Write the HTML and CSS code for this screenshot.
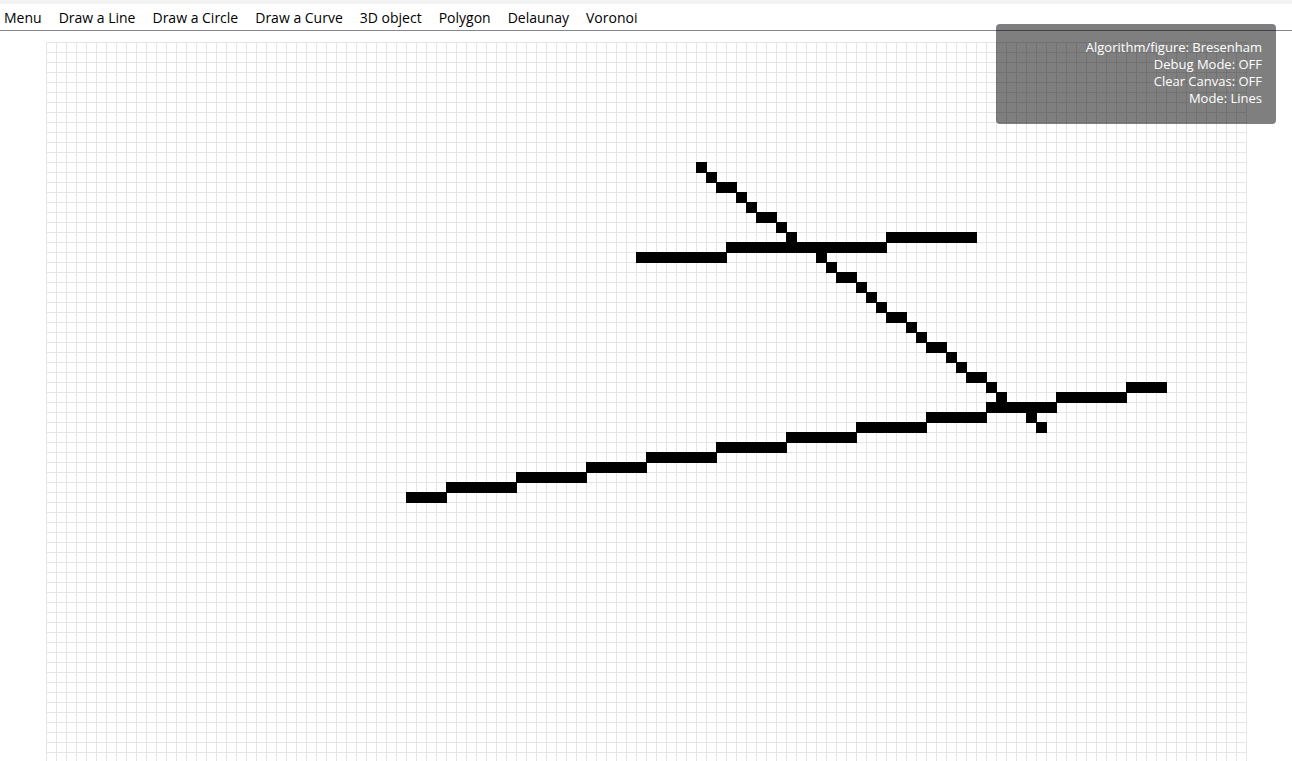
FILE: index.html
```html
<!DOCTYPE html>
<html lang="en">
<head>
<meta charset="utf-8">
<title>Raster graphics editor</title>
<link rel="stylesheet" href="styles.css">
</head>
<body>
<div class="app">
  <nav class="menu-bar">
    <button class="menu-item" type="button">Menu</button>
    <button class="menu-item" type="button">Draw a Line</button>
    <button class="menu-item" type="button">Draw a Circle</button>
    <button class="menu-item" type="button">Draw a Curve</button>
    <button class="menu-item" type="button">3D object</button>
    <button class="menu-item" type="button">Polygon</button>
    <button class="menu-item" type="button">Delaunay</button>
    <button class="menu-item" type="button">Voronoi</button>
  </nav>
  <main class="stage">
    <div class="sheet">
      <svg class="canvas" width="1201" height="801" shape-rendering="crispEdges" role="img" aria-label="Pixel grid with three Bresenham lines">
        <defs>
          <pattern id="grid" width="10" height="10" patternUnits="userSpaceOnUse">
            <path class="grid-line" d="M0 0h10v1h-9v9h-1z"/>
          </pattern>
        </defs>
        <rect width="1201" height="801" fill="url(#grid)"/>
        <g class="pixels">
          <path d="M650 120h11v11h-11z M660 130h11v11h-11z M670 140h21v11h-21z M690 150h11v11h-11z M700 160h11v11h-11z M710 170h21v11h-21z M730 180h11v11h-11z M740 190h11v11h-11z M770 210h11v11h-11z M780 220h11v11h-11z M790 230h21v11h-21z M810 240h11v11h-11z M820 250h11v11h-11z M830 260h11v11h-11z M840 270h21v11h-21z M860 280h11v11h-11z M870 290h11v11h-11z M880 300h21v11h-21z M900 310h11v11h-11z M910 320h11v11h-11z M920 330h21v11h-21z M940 340h11v11h-11z M950 350h11v11h-11z M980 370h11v11h-11z M990 380h11v11h-11z"/>
          <path d="M590 210h91v11h-91z M680 200h161v11h-161z M840 190h91v11h-91z"/>
          <path d="M360 450h41v11h-41z M400 440h71v11h-71z M470 430h71v11h-71z M540 420h61v11h-61z M600 410h71v11h-71z M670 400h71v11h-71z M740 390h71v11h-71z M810 380h71v11h-71z M880 370h61v11h-61z M940 360h71v11h-71z M1010 350h71v11h-71z M1080 340h41v11h-41z"/>
        </g>
      </svg>
    </div>
  </main>
  <aside class="status">
    <div>Algorithm/figure: Bresenham</div>
    <div>Debug Mode: OFF</div>
    <div>Clear Canvas: OFF</div>
    <div>Mode: Lines</div>
  </aside>
</div>
</body>
</html>
```
FILE: styles.css
```css
* { box-sizing: border-box; }

body {
  margin: 0;
  background: #fff;
}

.app {
  position: relative;
  display: flex;
  flex-direction: column;
  height: 100vh;
  overflow: hidden;
}

.menu-bar {
  display: flex;
  gap: 17px;
  padding: 3px 4px 1px;
  border-top: 4px solid #f2f2f2;
  border-bottom: 1px solid #828790;
}

.menu-item {
  padding: 0;
  border: 0;
  background: none;
  color: #000;
  font: 14px/22px "Open Sans", "Noto Sans", sans-serif;
  white-space: nowrap;
}

.stage {
  flex: 1;
  min-height: 0;
  padding-top: 11px;
  overflow: hidden;
}

.sheet {
  width: 1200px;
  margin: 0 auto;
}

.canvas { display: block; }

.grid-line { fill: #e5e5e5; }

.pixels { fill: #000; }

.status {
  position: absolute;
  top: 24px;
  right: 16px;
  width: 280px;
  min-height: 100px;
  padding: 15px 14px;
  border-radius: 4px;
  background: rgba(0, 0, 0, 0.5);
  color: #fff;
  font: 13px/17px "Open Sans", "Noto Sans", sans-serif;
  text-align: right;
}
```
